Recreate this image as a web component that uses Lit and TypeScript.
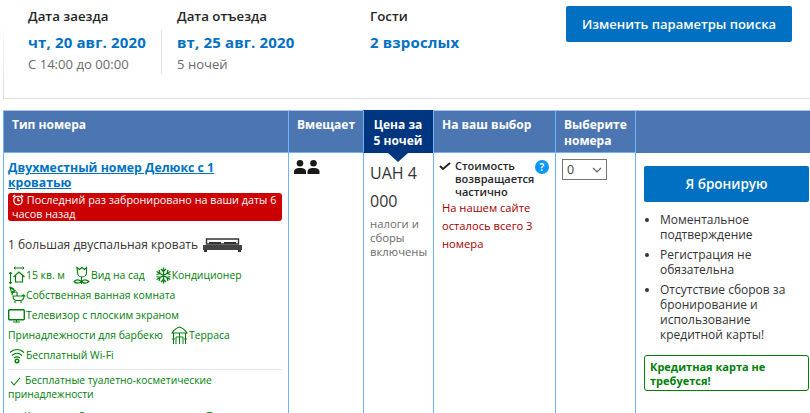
import { LitElement, html, css, svg } from "lit";
import { customElement } from "lit/decorators.js";

@customElement("app-root")
export class AppRoot extends LitElement {
  static styles = css`
    :host { display: block; width: 810px; height: 413px; overflow: hidden; background: #fff; font-family: "Open Sans", sans-serif; color: #333; font-size: 12px; }
    * { box-sizing: border-box; }
    .summary { margin-left: 3px; height: 99px; width: 807px; border-bottom: 1px solid #e0e0e0; background: linear-gradient(to bottom, #fff 20%, #dcdcdc 100%) no-repeat 0 0 / 1px 100%; display: flex; align-items: flex-start; padding: 7px 0 0 25px; }
    .stay { display: flex; flex-direction: column; }
    .stay .lab { font-size: 13.3px; font-weight: 600; line-height: 18px; color: #262626; white-space: nowrap; }
    .stay .val { font-size: 15px; font-weight: 700; letter-spacing: 0.15px; color: #0071c2; line-height: 20px; margin-top: 7px; white-space: nowrap; }
    .stay .sub { font-size: 13.1px; color: #6b6b6b; line-height: 18px; margin-top: 3px; white-space: nowrap; }
    .s1 { width: 149px; position: relative; }
    .s1::after { content: ""; position: absolute; left: 133px; top: 23px; width: 1px; height: 44px; background: #e6e6e6; }
    .s2 { width: 193px; }
    .s3 { width: 196px; }
    .btn { background: #0071c2; color: #fff; font-weight: 600; border-radius: 2px; display: flex; align-items: center; justify-content: center; white-space: nowrap; }
    .change { width: 226px; height: 36px; font-size: 13px; margin-top: -1px; }
    .table { margin: 11px 0 0 3px; display: grid; grid-template-columns: 285px 75px 70px 122px 80px 178px; width: 810px; }
    .th { background: #4c76b2; color: #fff; font-weight: 700; font-size: 12px; line-height: 16px; height: 43px; padding: 6px 8px 0; border-top: 1px solid #a9c4e4; border-left: 1px solid #69b3ff; border-bottom: 1px solid #69b3ff; }
    .th.last { border-bottom: 0; }
    .th.price { background: #003580; border-top-color: #003580; border-bottom-color: #003580; text-align: center; position: relative; padding: 6px 5px 0 4px; }
    .th.price::after { content: ""; position: absolute; left: 24px; bottom: -10px; border-left: 10px solid transparent; border-right: 10px solid transparent; border-top: 9px solid #003580; z-index: 1; }
    .td { border-left: 1px solid #69b3ff; height: 262px; min-width: 0; }
    .room { padding: 7px 0 0 4px; }
    .name { font-size: 12.3px; font-weight: 700; color: #0071c2; text-decoration: underline; line-height: 15px; display: block; }
    .alert { background: #cc0000; color: #fff; border-radius: 3px; padding: 0 4px; line-height: 14px; font-size: 10.8px; margin-top: 3px; height: 28px; width: 274px; }
    .alert svg { vertical-align: -2px; }
    .beds { font-size: 12px; margin-top: 14px; line-height: 20px; display: flex; align-items: center; gap: 5px; color: #333; }
    .fac { color: #008009; font-size: 10.4px; line-height: 20px; height: 20px; display: flex; align-items: center; white-space: nowrap; }
    .fac svg { flex: none; }
    .facs { margin-top: 10px; }
    .fac span { margin: 0 8px 0 1px; }
    .fac span.plain { margin-left: 0; }
    .fac span.wide { margin-right: 10px; }
    .hr { height: 1px; background: #e6e6e6; margin-top: 4px; width: 274px; }
    .perk { color: #008009; font-size: 10.3px; line-height: 14px; margin-top: 3px; }
    .perk svg { vertical-align: -2px; margin: 0 4px 0 2px; }
    .perks2 { color: #008009; font-size: 10.3px; line-height: 14px; margin-top: 8px; white-space: nowrap; display: flex; }
    .perks2 div { margin-right: 9px; }
    .perks2 svg { vertical-align: -2px; margin: 0 3px 0 2px; }
    .persons { padding: 7px 0 0 5px; }
    .pricecell { padding: 6px 2px 0 6px; }
    .amt { font-size: 16px; line-height: 28px; color: #333; }
    .taxes { font-size: 11.3px; line-height: 14px; color: #6b6b6b; margin-top: 2px; }
    .choice { padding: 6px 5px 0 5px; position: relative; }
    .cancel { display: flex; gap: 4px; font-size: 11px; font-weight: 600; line-height: 13px; color: #262626; }
    .cancel svg { flex: none; margin-top: 2px; }
    .help { position: absolute; right: 6px; top: 7px; width: 14px; height: 14px; border-radius: 50%; background: #0896ff; color: #fff; font-size: 10px; font-weight: 700; line-height: 14px; text-align: center; }
    .left { color: #a30000; font-size: 11.2px; line-height: 18px; margin-top: 1px; padding-left: 3px; }
    .sel { padding: 6px 0 0 6px; }
    .selbox { width: 45px; height: 21px; border: 1px solid #767676; display: flex; align-items: center; justify-content: space-between; padding: 0 4px 0 4px; font-size: 12.5px; color: #444; }
    .book { padding: 13px 0 0 8px; }
    .bookbtn { width: 165px; height: 36px; font-size: 13.5px; }
    ul { margin: 10px 0 0; padding: 0 0 0 16px; width: 164px; font-size: 12px; line-height: 15px; color: #333; }
    li { margin-bottom: 5px; }
    .nocard { margin-top: 13px; width: 165px; border: 1px solid #008009; border-radius: 3px; color: #008009; font-size: 11px; font-weight: 700; line-height: 14px; padding: 4px 5px; height: 36px; }
  `;

  private ic(w: number, h: number, body: unknown) {
    return html`<svg width=${w} height=${h} viewBox="0 0 ${w} ${h}" fill="none" stroke="#008009" stroke-width="1">${body}</svg>`;
  }
  private check() {
    return html`<svg width="11" height="9" viewBox="0 0 11 9" fill="none" stroke="#008009" stroke-width="1.1"><path d="M1 4.500l3 3.500L10 1"/></svg>`;
  }

  render() {
    return html`
      <div class="summary">
        <div class="stay s1"><div class="lab">Дата заезда</div><div class="val">чт, 20 авг. 2020</div><div class="sub">С 14:00 до 00:00</div></div>
        <div class="stay s2"><div class="lab">Дата отъезда</div><div class="val">вт, 25 авг. 2020</div><div class="sub">5 ночей</div></div>
        <div class="stay s3"><div class="lab">Гости</div><div class="val">2 взрослых</div></div>
        <div class="btn change">Изменить параметры поиска</div>
      </div>
      <div class="table">
        <div class="th">Тип номера</div>
        <div class="th">Вмещает</div>
        <div class="th price">Цена за<br />5 ночей</div>
        <div class="th">На ваш выбор</div>
        <div class="th">Выберите<br />номера</div>
        <div class="th last"></div>

        <div class="td room">
          <a class="name">Двухместный номер Делюкс с 1<br />кроватью</a>
          <div class="alert">
            <svg width="12" height="12" viewBox="0 0 12 12" fill="none" stroke="#fff" stroke-width="1.3"><circle cx="6" cy="6.500" r="4.200"/><path d="M6 4v2.700h2"/><path d="M1 3l2-2M11 3L9 1" stroke-width="1.600"/></svg>
            Последний раз забронировано на ваши даты 6 часов назад
          </div>
          <div class="beds">1 большая двуспальная кровать
            <svg width="39" height="14" viewBox="0 0 39 14"><path d="M3.500 1h32v5h-32z" fill="none" stroke="#333" stroke-width="1.400"/><path d="M0 7h39v5H0z" fill="#444"/><path d="M6 4h12v2H6zM21 4h12v2H21z" fill="#333"/><path d="M1 12h3v2H1zM35 12h3v2h-3z" fill="#333"/></svg>
          </div>
          <div class="facs">
            <div class="fac">
              ${this.ic(17, 19, svg`<path d="M2.500 6v12M1 8l1.500-2L4 8M1 16l1.500 2L4 16M6 2h10M7.500 .8L6 2l1.500 1.200M14.500 .8L16 2l-1.500 1.200"/><path d="M5.500 11l5.500-5 5.500 5M7.500 9.500V16h7V9.500" stroke-width="1.200"/>`)}
              <span>15 кв. м</span>
              ${this.ic(17, 19, svg`<path d="M4 1.500l2.500 2 2.500-2 2.500 2 2-2v5a4.500 4.500 0 0 1-9 0zM8.500 11v7M1 15.500c2-2 5-2 7.500 0-2.500 2-5.500 2-7.500 0zM8.500 15.500c2-2 5-2 7.500 0-2.500 2-5.500 2-7.500 0z" stroke-width="1.100"/>`)}
              <span class="wide">Вид на сад</span>
              ${this.ic(17, 17, svg`<path d="M8.500 .5v16M1.600 4.500l13.800 8M15.400 4.500l-13.800 8M6 2l2.500 2.500L11 2M6 15l2.500-2.500L11 15M1.500 7.500L5 6.500 4 3M15.500 7.500L12 6.500l1-3.500M1.500 9.500L5 10.500 4 14M15.500 9.500L12 10.500l1 3.500" stroke-width="1.300"/>`)}
              <span class="plain">Кондиционер</span>
            </div>
            <div class="fac">
              ${this.ic(18, 18, svg`<path d="M2 1.500l5 3-3.500 2zM6 3L2 1M4 9c0-2 1-3 3-3h2M5 10h11c0 3-2 4.500-4 4.500H9c-2 0-4-1.500-4-4.500zM14 10c1-1.500 3-1 3 .5M7 15v2M13 15v2M9 6v4" stroke-width="1.100"/>`)}
              <span class="plain">Собственная ванная комната</span>
            </div>
            <div class="fac">
              ${this.ic(17, 15, svg`<rect x=".7" y="1.700" width="15.600" height="10" rx="1" stroke-width="1.400"/><path d="M5 14h7M8.500 12v2"/>`)}
              <span class="plain" style="margin-left:1px">Телевизор с плоским экраном</span>
            </div>
            <div class="fac">
              <span class="plain">Принадлежности для барбекю</span>
              ${this.ic(17, 19, svg`<path d="M1 7c2-3 4-5 7.500-6 3.500 1 5.500 3 7.500 6zM1 7h15" stroke-width="1.200"/><path d="M2.500 7v11M14.500 7v11M8.500 7v11M5 11h7M5 11v7M12 11v7M1 13h3M13 13h3"/>`)}
              <span>Терраса</span>
            </div>
            <div class="fac">
              ${this.ic(18, 17, svg`<path d="M2 5.500c4-4 10-4 14 0M4 8.500c3-3 7-3 10 0M6 11c2-1.500 4-1.500 6 0" stroke-width="1.200"/><circle cx="9" cy="14" r="1.800" stroke-width="1.400"/>`)}
              <span class="plain">Бесплатный Wi-Fi</span>
            </div>
          </div>
          <div class="hr"></div>
          <div class="perk">${this.check()}Бесплатные туалетно-косметические принадлежности</div>
          <div class="perks2">
            <div>${this.check()}Кухня</div>
            <div>${this.check()}Стиральная машина</div>
            <div>${this.check()}Туалет</div>
          </div>
        </div>

        <div class="td persons">
          <svg width="26" height="14" viewBox="0 0 26 14" fill="#1a1a1a"><circle cx="6" cy="3.300" r="3.300"/><path d="M0 14v-2c0-3 2-4 6-4s6 1 6 4v2z"/><circle cx="19.500" cy="3.300" r="3.300"/><path d="M13.500 14v-2c0-3 2-4 6-4s6 1 6 4v2z"/></svg>
        </div>

        <div class="td pricecell">
          <div class="amt">UAH 4 000</div>
          <div class="taxes">налоги и сборы включены</div>
        </div>

        <div class="td choice">
          <div class="cancel">
            <svg width="12" height="10" viewBox="0 0 12 10" fill="none" stroke="#262626" stroke-width="2"><path d="M1 5l3 3 7-6"/></svg>
            <div>Стоимость<br />возвращается<br />частично</div>
          </div>
          <div class="help">?</div>
          <div class="left">На нашем сайте осталось всего 3 номера</div>
        </div>

        <div class="td sel">
          <div class="selbox">0
            <svg width="10" height="6" viewBox="0 0 10 6" fill="none" stroke="#666" stroke-width="1.200"><path d="M1 1l4 4 4-4"/></svg>
          </div>
        </div>

        <div class="td book">
          <div class="btn bookbtn">Я бронирую</div>
          <ul>
            <li>Моментальное подтверждение</li>
            <li>Регистрация не обязательна</li>
            <li>Отсутствие сборов за бронирование и использование кредитной карты!</li>
          </ul>
          <div class="nocard">Кредитная карта не требуется!</div>
        </div>
      </div>
    `;
  }
}
